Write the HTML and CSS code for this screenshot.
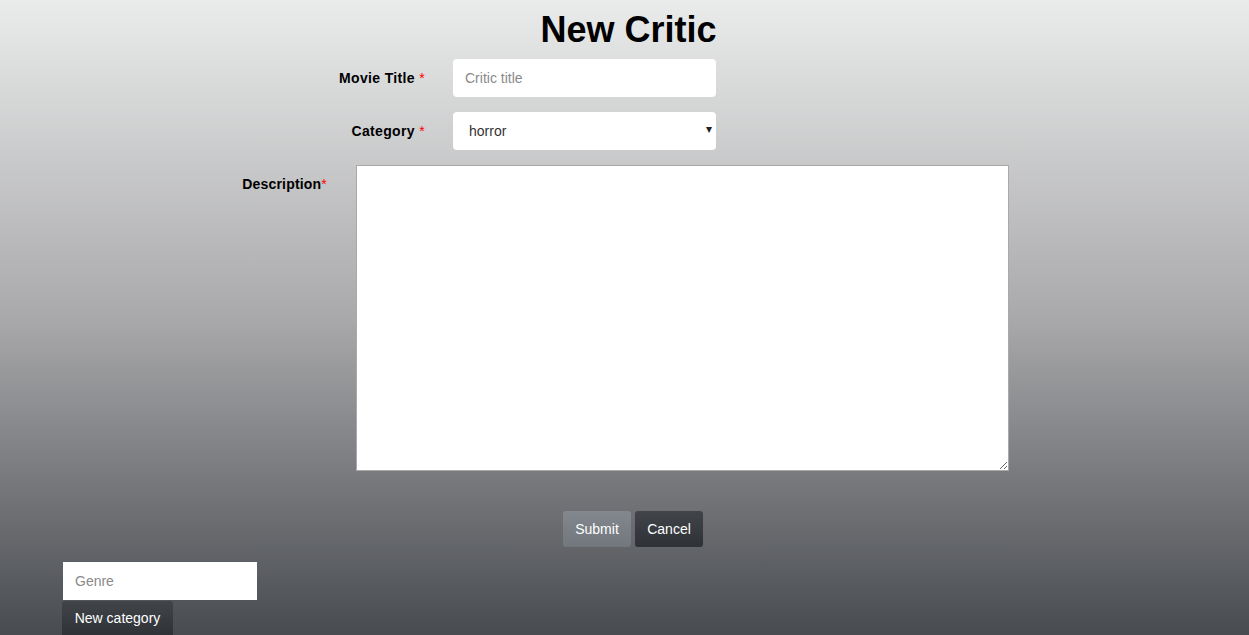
FILE: index.html
```html
<!DOCTYPE html>
<html lang="en">
<head>
<meta charset="utf-8">
<title>New Critic</title>
<link rel="stylesheet" href="styles.css">
</head>
<body>
<div class="page">
  <h1 class="title">New Critic</h1>
  <form class="form">
    <div class="row row-short">
      <label class="label label-short" for="title">Movie Title <span class="req">*</span></label>
      <input class="field" id="title" type="text" placeholder="Critic title">
    </div>
    <div class="row row-short">
      <label class="label label-short" for="cat">Category <span class="req">*</span></label>
      <div class="select-wrap">
        <select class="field select" id="cat">
          <option>horror</option>
        </select>
        <span class="arrow">&#9662;</span>
      </div>
    </div>
    <div class="row row-long">
      <label class="label label-long" for="desc">Description<span class="req">*</span></label>
      <textarea class="desc" id="desc"></textarea>
    </div>
    <div class="actions">
      <button type="button" class="btn btn-grey">Submit</button>
      <button type="button" class="btn btn-dark">Cancel</button>
    </div>
  </form>
  <div class="newcat">
    <input class="genre" type="text" placeholder="Genre">
    <button type="button" class="btn btn-dark btn-cat">New category</button>
  </div>
</div>
</body>
</html>
```

FILE: styles.css
```css
html, body {
  margin: 0;
  padding: 0;
  height: 100%;
}
body {
  background: linear-gradient(to bottom, #eaebeb 0%, #a9a9ab 50%, #484b50 100%);
  font-family: "Liberation Sans", Arial, sans-serif;
  font-size: 14px;
  color: #000;
  overflow: hidden;
}
.page {
  display: flex;
  flex-direction: column;
}
.title {
  margin: 10px 0 0 8px;
  text-align: center;
  font-size: 36px;
  line-height: 40px;
  font-weight: bold;
  color: #000;
}
.form {
  display: flex;
  flex-direction: column;
  margin-top: 9px;
}
.row {
  display: flex;
  align-items: flex-start;
}
.row-short {
  margin-left: 300px;
  margin-bottom: 15px;
  align-items: center;
}
.row-long {
  margin-left: 200px;
}
.label {
  font-weight: bold;
  text-align: right;
  box-sizing: border-box;
  line-height: 16px;
}
.label-short {
  width: 153px;
  padding-right: 28px;
  letter-spacing: 0.35px;
}
.label-long {
  width: 156px;
  padding-right: 29px;
  padding-top: 11px;
  letter-spacing: 0.2px;
}
.req {
  color: #ff0000;
  font-weight: normal;
}
.field {
  box-sizing: border-box;
  width: 263px;
  height: 38px;
  border: none;
  border-radius: 4px;
  background: #fff;
  padding: 0 12px;
  font-family: "Liberation Sans", Arial, sans-serif;
  font-size: 14px;
  color: #333;
  outline: none;
}
.field::placeholder,
.genre::placeholder {
  color: #8a8a8a;
}
.select-wrap {
  position: relative;
  width: 263px;
  height: 38px;
}
.select {
  appearance: none;
  -webkit-appearance: none;
  padding-left: 16px;
  color: #333;
}
.arrow {
  position: absolute;
  right: 4px;
  top: 10px;
  font-size: 12px;
  color: #222;
  pointer-events: none;
}
.desc {
  box-sizing: border-box;
  width: 653px;
  height: 306px;
  border: 1px solid #a9a9a9;
  background: #fff;
  margin: 0;
  padding: 2px;
  font-family: "Liberation Sans", Arial, sans-serif;
  font-size: 14px;
  outline: none;
}
.actions {
  display: flex;
  gap: 4px;
  margin: 40px 0 0 563px;
}
.btn {
  box-sizing: border-box;
  height: 36px;
  border: none;
  border-radius: 3px;
  padding: 0 12px;
  font-family: "Liberation Sans", Arial, sans-serif;
  font-size: 14px;
  color: #fff;
  cursor: pointer;
}
.btn-grey {
  width: 68px;
  background: linear-gradient(to bottom, #82888e, #71777c);
}
.btn-dark {
  background: linear-gradient(to bottom, #41454a, #2e3135);
}
.actions .btn-dark {
  width: 68px;
}
.newcat {
  display: flex;
  flex-direction: column;
  align-items: flex-start;
  margin: 15px 0 0 62px;
}
.genre {
  box-sizing: border-box;
  width: 194px;
  height: 38px;
  margin-left: 1px;
  border: none;
  background: #fff;
  padding: 0 12px;
  font-family: "Liberation Sans", Arial, sans-serif;
  font-size: 14px;
  outline: none;
}
.btn-cat {
  margin-top: 1px;
  width: 111px;
  padding: 0 0 2px;
}
```
